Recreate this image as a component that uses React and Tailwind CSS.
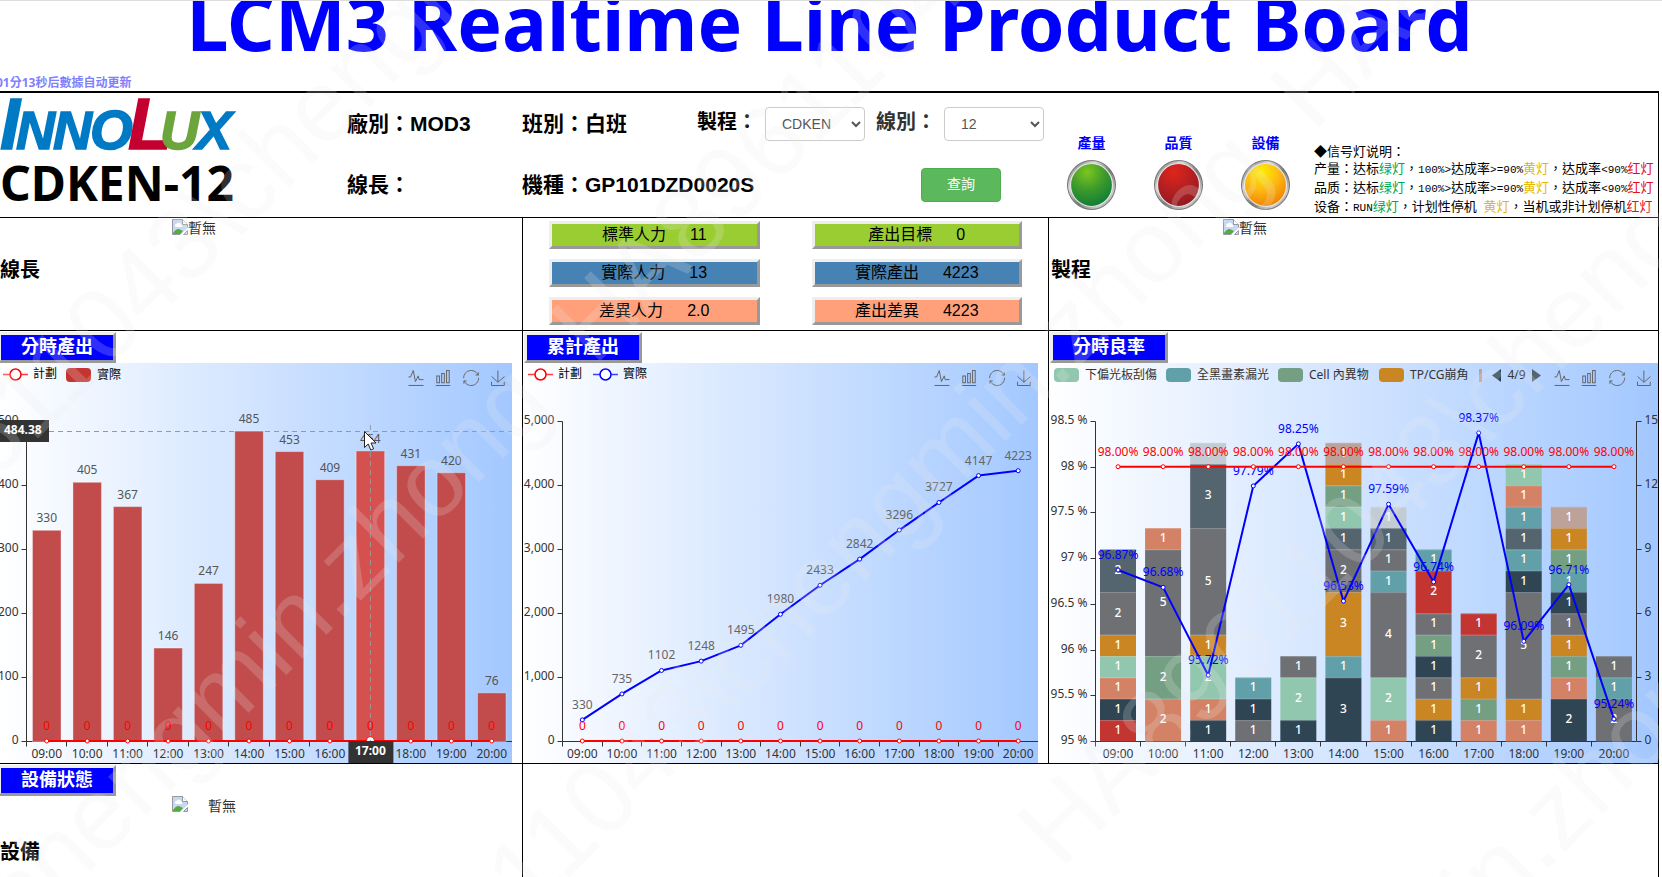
import React from "react";

const HOURS = ["09:00", "10:00", "11:00", "12:00", "13:00", "14:00", "15:00", "16:00", "17:00", "18:00", "19:00", "20:00"];
const HOURLY = [330, 405, 367, 146, 247, 485, 453, 409, 454, 431, 420, 76];
const TOTALS = [330, 735, 1102, 1248, 1495, 1980, 2433, 2842, 3296, 3727, 4147, 4223];
const YIELDS = [96.87, 96.68, 95.72, 97.79, 98.25, 96.53, 97.59, 96.74, 98.37, 96.09, 96.71, 95.24];

const RED = "#c23531";
const NAVY = "#2f4554";
const TEAL = "#61a0a8";
const CORAL = "#d48265";
const MINT = "#91c7ae";
const GREEN = "#749f83";
const AMBER = "#ca8622";
const ROSE = "#bda29a";
const GRAY = "#6e7074";
const SLATE = "#546570";
const SILVER = "#c4ccd3";

// Defects of each hour, listed from the bottom of the stack.
const DEFECTS = [
  [[RED, 1], [NAVY, 1], [CORAL, 1], [MINT, 1], [AMBER, 1], [GRAY, 2], [SLATE, 2]],
  [[CORAL, 2], [GREEN, 2], [GRAY, 5], [CORAL, 1]],
  [[NAVY, 1], [CORAL, 1], [MINT, 2], [AMBER, 1], [GRAY, 5], [SLATE, 3], [SILVER, 1]],
  [[GRAY, 1], [NAVY, 1], [TEAL, 1]],
  [[NAVY, 1], [MINT, 2], [GRAY, 1]],
  [[NAVY, 3], [TEAL, 1], [AMBER, 3], [GRAY, 2], [SLATE, 1], [MINT, 1], [GREEN, 1], [AMBER, 1], [ROSE, 1]],
  [[CORAL, 1], [MINT, 2], [GRAY, 4], [TEAL, 1], [GRAY, 1], [SLATE, 1], [SILVER, 1]],
  [[NAVY, 1], [AMBER, 1], [GRAY, 1], [NAVY, 1], [GREEN, 1], [GRAY, 1], [RED, 2], [TEAL, 1]],
  [[CORAL, 1], [GREEN, 1], [AMBER, 1], [GRAY, 2], [RED, 1]],
  [[CORAL, 1], [AMBER, 1], [GRAY, 5], [NAVY, 1], [TEAL, 1], [SLATE, 1], [TEAL, 1], [CORAL, 1], [MINT, 1]],
  [[NAVY, 2], [CORAL, 1], [GREEN, 1], [AMBER, 1], [GRAY, 1], [NAVY, 1], [TEAL, 1], [GREEN, 1], [AMBER, 1], [ROSE, 1]],
  [[GRAY, 2], [TEAL, 1], [GRAY, 1]],
];

const BASE = 378.5;
const TOP = 58.5;

function Backdrop({ id, x, width }) {
  return (
    <>
      <defs>
        <linearGradient id={id} x1="0" y1="0" x2="1" y2="0">
          <stop offset="0" stopColor="#ffffff" />
          <stop offset="1" stopColor="#a3c8ff" />
        </linearGradient>
      </defs>
      <rect x={x} y="0" width={width} height="400" fill={`url(#${id})`} />
    </>
  );
}

function Toolbox({ right }) {
  const tools = [
    ["4.1 6.9 51.4 51.1", "M4.1,28.9h7.1l9.3-22l7.4,38l9.7-19.7l3,12.8h14.9M4.1,58h51.4", 96],
    ["3.1 2 53.7 56.1", "M6.7,22.9h10V48h-10V22.9zM24.9,13h10v35h-10V13zM43.2,2h10v46h-10V2zM3.1,58h53.7", 69],
    ["2 2 55 56", "M47,18.9h9.8V8.7M56.3,20.1C52.1,9,40.5,0.6,26.8,2.1C12.6,3.7,1.6,16.2,2.1,30.6M13,41.1H3.1v10.2M3.7,39.9c4.2,11.1,15.8,19.5,29.5,18c14.2-1.6,25.2-14.1,24.7-28.5", 41],
    ["4.6 0 50.1 58", "M4.7,22.9L29.3,45.5L54.7,23.4M4.6,43.6L4.6,58L53.8,58L53.8,43.6M29.2,45.1L29.2,0", 14],
  ];
  return tools.map(([box, d, offset]) => (
    <svg key={offset} x={right - offset - 7.5} y="7.5" width="15" height="15" viewBox={box} overflow="visible">
      <path d={d} fill="none" stroke="#666" strokeWidth="1" vectorEffect="non-scaling-stroke" />
    </svg>
  ));
}

function HourAxis({ left, right, step, skip }) {
  return (
    <g>
      <path d={`M${left} ${BASE}H${right}`} stroke="#333" />
      {HOURS.map((hour, i) => (
        <g key={hour}>
          <path d={`M${Math.floor(left + i * step) + 0.5} ${BASE}v5`} stroke="#333" />
          {i !== skip && (
            <text x={left + (i + 0.5) * step} y="395" textAnchor="middle" fill="#333">
              {hour}
            </text>
          )}
        </g>
      ))}
    </g>
  );
}

function ValueAxis({ x, labels, side }) {
  const dir = side === "right" ? 1 : -1;
  const gap = (BASE - TOP) / (labels.length - 1);
  return (
    <g>
      <path d={`M${x} ${TOP}V${BASE}`} stroke="#333" />
      {labels.map((label, i) => {
        const y = Math.round(BASE - i * gap - 0.5) + 0.5;
        return (
          <g key={label}>
            <path d={`M${x} ${y}h${5 * dir}`} stroke="#333" />
            <text x={x + 8 * dir} y={y + 2} textAnchor={dir > 0 ? "start" : "end"} fill="#333">
              {label}
            </text>
          </g>
        );
      })}
    </g>
  );
}

function Series({ points, color, labels, labelColor }) {
  return (
    <g>
      <polyline points={points.map((p) => p.join(",")).join(" ")} fill="none" stroke={color} strokeWidth="2" strokeLinejoin="bevel" />
      {points.map(([x, y], i) => (
        <g key={i}>
          <circle cx={x} cy={y} r="2" fill="#fff" stroke={color} />
          <text x={x} y={y - 11} textAnchor="middle" fill={labelColor || color}>
            {labels[i]}
          </text>
        </g>
      ))}
    </g>
  );
}

function LineKey({ x, color, label }) {
  return (
    <g>
      <path d={`M${x} 11.5h25`} stroke={color} strokeWidth="1.5" opacity="0.75" />
      <circle cx={x + 12.5} cy="11.5" r="5.5" fill="#fff" stroke={color} strokeWidth="1.5" />
      <text x={x + 30} y="15" fill="#000">
        {label}
      </text>
    </g>
  );
}

function BlockKey({ x, color, label, textColor = "#333" }) {
  return (
    <g>
      <rect x={x} y="5" width="25" height="14" rx="4" fill={color} />
      <text x={x + 31} y="16" fill={textColor}>
        {label}
      </text>
    </g>
  );
}

const chartClass = "block h-auto w-full font-['Noto_Sans','Noto_Sans_CJK_TC',sans-serif] text-[12px]";

function HourlyChart() {
  const left = 26.5;
  const right = 512;
  const step = (right - left) / 12;
  const hover = 8;
  const hoverX = left + (hover + 0.5) * step;
  return (
    <svg viewBox="0 0 522 400" className={chartClass} role="img" aria-label="分時產出">
      <Backdrop id="hourly-bg" x={0} width={512} />
      <LineKey x={3} color="#f00" label="計劃" />
      <BlockKey x={66} color={RED} label="實際" textColor="#000" />
      <Toolbox right={512} />
      <ValueAxis x={left} labels={["0", "100", "200", "300", "400", "500"]} />
      <HourAxis left={left} right={right} step={step} skip={hover} />
      {HOURLY.map((value, i) => {
        const height = value * 0.64;
        const x = left + i * step + 6;
        return (
          <g key={i}>
            <rect x={x} y={BASE - height} width="28.5" height={height} fill={i === hover ? "#d55150" : "#c24c4b"} stroke="#fff" strokeOpacity="0.35" />
            <text x={left + (i + 0.5) * step} y={BASE - height - 8} textAnchor="middle" fill="#555">
              {value}
            </text>
          </g>
        );
      })}
      <Series
        points={HOURS.map((_, i) => [left + (i + 0.5) * step, 378])}
        color="#f00"
        labels={HOURS.map(() => "0")}
      />
      <circle cx={hoverX} cy={BASE - 1} r="4" fill="#fff" stroke="#f00" />
      <path d={`M49 68.5H512M${hoverX} 62V378`} stroke="#999" strokeDasharray="5 4" />
      <rect x="-2" y="57" width="51" height="22" fill="#333" />
      <text x="4" y="71" fontWeight="700" fill="#fff">
        484.38
      </text>
      <rect x={hoverX - 22} y="378" width="45" height="22" fill="#333" />
      <text x={hoverX} y="392" textAnchor="middle" fontWeight="700" fill="#fff">
        17:00
      </text>
      <path d="M364.500 68.500v16l3.700-3.500l2.600 6l2.800-1.200l-2.600-5.800h5z" fill="#fff" stroke="#222" />
    </svg>
  );
}

function TotalChart() {
  const left = 39.5;
  const right = 515;
  const step = (right - left) / 12;
  const at = (value, i) => [left + (i + 0.5) * step, 378 - value * 0.064];
  return (
    <svg viewBox="0 0 525 400" className={chartClass} role="img" aria-label="累計產出">
      <Backdrop id="total-bg" x={1} width={514} />
      <LineKey x={5} color="#f00" label="計劃" />
      <LineKey x={70} color="#00f" label="實際" />
      <Toolbox right={515} />
      <ValueAxis x={left} labels={["0", "1,000", "2,000", "3,000", "4,000", "5,000"]} />
      <HourAxis left={left} right={right} step={step} />
      <Series points={TOTALS.map(at)} color="#00f" labels={TOTALS} labelColor="#666" />
      <Series points={HOURS.map((_, i) => at(0, i))} color="#f00" labels={HOURS.map(() => "0")} />
    </svg>
  );
}

function YieldChart() {
  const left = 46.5;
  const right = 587.5;
  const step = (right - left) / 12;
  const unit = (BASE - TOP) / 15;
  const at = (value, i) => [left + (i + 0.5) * step, 378 - ((value - 95) * (BASE - TOP)) / 3.5];
  return (
    <svg viewBox="0 0 609 400" className={chartClass} role="img" aria-label="分時良率">
      <Backdrop id="yield-bg" x={1} width={608} />
      <BlockKey x={5} color={MINT} label="下偏光板刮傷" />
      <BlockKey x={117} color={TEAL} label="全黑畫素漏光" />
      <BlockKey x={229} color={GREEN} label="Cell 內異物" />
      <BlockKey x={330} color={AMBER} label="TP/CG崩角" />
      <rect x="430" y="6" width="3" height="13" fill={ROSE} />
      <path d="M443 12.500L452 6V19z" fill={NAVY} />
      <text x="467.500" y="16" textAnchor="middle" fill="#333">
        4/9
      </text>
      <path d="M492 12.500L483 6V19z" fill={SLATE} />
      <Toolbox right={609} />
      <ValueAxis x={left} labels={["95 %", "95.5 %", "96 %", "96.5 %", "97 %", "97.5 %", "98 %", "98.5 %"]} />
      <ValueAxis x={right} labels={["0", "3", "6", "9", "12", "15"]} side="right" />
      <HourAxis left={left} right={right} step={step} />
      {DEFECTS.map((stack, i) => {
        let sum = 0;
        return stack.map(([color, count], j) => {
          sum += count;
          const y = BASE - sum * unit;
          return (
            <g key={`${i}-${j}`}>
              <rect x={left + i * step + 4.5} y={y} width="36" height={count * unit} fill={color} />
              <path d={`M${left + i * step + 4.5} ${y + 0.5}h36`} stroke="#fff" strokeOpacity="0.15" />
              <text x={left + (i + 0.5) * step} y={y + (count * unit) / 2 + 3} textAnchor="middle" fill="#fff" fontWeight="500">
                {count}
              </text>
            </g>
          );
        });
      })}
      <Series points={YIELDS.map(at)} color="#00f" labels={YIELDS.map((v) => `${v.toFixed(2)}%`)} />
      <Series points={HOURS.map((_, i) => at(98, i))} color="#f00" labels={HOURS.map(() => "98.00%")} />
    </svg>
  );
}

function Logo() {
  const letters = [
    ["I", 0, 72, "#007ac5"],
    ["N", 16, 54, "#007ac5"],
    ["N", 53, 54, "#007ac5"],
    ["O", 90, 55, "#007ac5"],
    ["L", 128, 72, "#c3002f"],
    ["U", 160, 54, "#6ba53c"],
    ["X", 196, 54, "#007ac5"],
  ];
  return (
    <svg width="240" height="56" viewBox="0 0 240 56" className="block font-['Liberation_Sans',sans-serif] font-bold italic" role="img" aria-label="INNOLUX">
      {letters.map(([letter, x, size, color]) => (
        <text key={x} x={x} y="52" fontSize={size} fill={color} stroke={color} strokeWidth="1.500">
          {letter}
        </text>
      ))}
    </svg>
  );
}

function BrokenImage() {
  return (
    <svg width="16" height="16" viewBox="0 0 16 16" className="block shrink-0" aria-hidden="true">
      <path d="M.5 .5H10.500L15.500 5.500V9L8.500 15.500H.500z" fill="#c6d8f5" />
      <path d="M3 6.500a2 2 0 0 1 2-2a2.300 2.300 0 0 1 4 1a1.300 1.300 0 0 1 .5 2.500H4a1.300 1.300 0 0 1-1-1.500z" fill="#fff" />
      <path d="M1 15.500V14Q5 8.500 8 10.500L11 12L8 15.500z" fill="#58a942" />
      <path d="M8 15.500H.500V.500H10.500L15.500 5.500V8.500" fill="none" stroke="#999" />
      <path d="M10.500 .500V5.500H15.500" fill="#fff" stroke="#999" />
      <path d="M11.500 15.500H15.500V11.500z" fill="#c6d8f5" stroke="#999" />
    </svg>
  );
}

function Tab({ children }) {
  return (
    <h2 className="flex h-[31px] w-[118px] items-center justify-center border-3 border-t-[#eee] border-r-[#999] border-b-[#999] border-l-[#eee] bg-[#0000ff] text-[18px] font-bold text-white">
      {children}
    </h2>
  );
}

function Stat({ tone, label, value }) {
  return (
    <div className={`flex h-7 items-center justify-center gap-6 border-3 border-t-[#eee] border-r-[#999] border-b-[#999] border-l-[#eee] text-base leading-5 text-black ${tone}`}>
      <span>{label}</span>
      <span>{value}</span>
    </div>
  );
}

function Person({ label, className = "" }) {
  return (
    <section className={`grid grid-cols-[172px_1fr] border-y border-r border-black ${className}`}>
      <h2 className="self-center pb-2 text-[20px] leading-6 font-bold text-black">{label}</h2>
      <div className="flex pt-px text-[14px] leading-5 text-[#333]">
        <BrokenImage />
        <span className="-mt-px">暫無</span>
      </div>
    </section>
  );
}

function Light({ id, label, from, mid, to }) {
  return (
    <div className="flex w-[49px] flex-col items-center gap-[7px]">
      <span className="text-[14px] leading-5 font-bold whitespace-nowrap text-[#0000ff]">{label}</span>
      <svg width="49" height="50" viewBox="0 0 49 50" role="img" aria-label={label}>
        <defs>
          <radialGradient id={id} cx="0.4" cy="0.2" r="0.85">
            <stop offset="0" stopColor={from} />
            <stop offset="0.5" stopColor={mid} />
            <stop offset="1" stopColor={to} />
          </radialGradient>
          <linearGradient id={`${id}-rim`} x1="0" y1="0" x2="1" y2="1">
            <stop offset="0" stopColor="#555" />
            <stop offset="0.3" stopColor="#ddd" />
            <stop offset="0.55" stopColor="#777" />
            <stop offset="0.8" stopColor="#ccc" />
            <stop offset="1" stopColor="#444" />
          </linearGradient>
        </defs>
        <ellipse cx="24.500" cy="25" rx="24" ry="24.500" fill={`url(#${id}-rim)`} stroke="#555" strokeWidth="0.8" />
        <ellipse cx="24.500" cy="25" rx="21" ry="21.500" fill={`url(#${id})`} stroke="#e5e5e5" strokeWidth="1.200" />
      </svg>
    </div>
  );
}

const G = ({ children = "绿灯" }) => <span className="text-[#00a650]">{children}</span>;
const Y = ({ children = "黄灯" }) => <span className="text-[#e6b800]">{children}</span>;
const R = ({ children = "红灯" }) => <span className="text-[#e01020]">{children}</span>;
const M = ({ children }) => <span className="font-['Liberation_Mono',monospace] text-[11px]">{children}</span>;

function Field({ id, label, options, tone }) {
  return (
    <div className="flex items-center gap-2">
      <label htmlFor={id} className={`w-[60px] pb-1 text-[20px] whitespace-nowrap ${tone}`}>
        {label}：
      </label>
      <select id={id} className="h-[34px] w-[100px] rounded-sm border border-[#ccc] bg-white px-3 text-[14px] font-normal text-[#555]">
        {options.map((option) => (
          <option key={option}>{option}</option>
        ))}
      </select>
    </div>
  );
}

const MARK = "HA89611043\\chengmin.zhong\u00a0\u00a0";
const MARK_ROWS = [
  [-602, 336],
  [-1260, 679],
  [-586, 1022],
  [-1286, 1365],
  [-586, 1708],
];

function Watermark() {
  return (
    <svg className="pointer-events-none absolute inset-0 h-full w-full font-['Liberation_Sans',sans-serif]" aria-hidden="true">
      <g transform="rotate(-45)" fill="#ebebeb" fillOpacity="0.2" fontSize="102">
        {MARK_ROWS.map(([x, y]) => (
          <text key={y} x={x} y={y}>
            {MARK + MARK}
          </text>
        ))}
      </g>
    </svg>
  );
}

export default function App() {
  return (
    <div className="relative flex min-h-screen w-full flex-col overflow-hidden border-t border-[#ddd] bg-white pr-[3px] font-['Liberation_Sans','Noto_Sans_CJK_TC',sans-serif]">
      <h1 className="text-center font-['Noto_Sans',sans-serif] text-[75px] leading-[42px] font-bold whitespace-nowrap text-[#0000ff]">
        LCM3 Realtime Line Product Board
      </h1>
      <p className="-ml-1 pt-[31px] font-['Noto_Sans','Noto_Sans_CJK_TC',sans-serif] text-[12px] leading-[17px] font-bold text-[#8080ff]">
        01分13秒后數據自动更新
      </p>

      <header className="flex border-t-2 border-r border-black text-[21px] font-bold whitespace-nowrap text-black">
        <div className="w-[347px] shrink-0 pt-1">
          <Logo />
          <p className="pt-1 font-['Noto_Sans',sans-serif] text-[48px] leading-[52px]">CDKEN-12</p>
        </div>
        <div className="mb-0.5 grid h-[122px] grow grid-cols-[175px_175px_1fr] grid-rows-2 items-center">
          <p>廠別：MOD3</p>
          <p>班別：白班</p>
          <div className="flex items-center gap-[11px]">
            <Field id="process" label="製程" options={["CDKEN"]} tone="text-black" />
            <Field id="line" label="線別" options={["12"]} tone="text-[#333]" />
          </div>
          <p>線長：</p>
          <p>機種：GP101DZD0020S</p>
          <button type="button" className="ml-56 h-[34px] w-20 rounded-sm border border-[#4cae4c] bg-[#5cb85c] text-[14px] font-normal text-white">
            查詢
          </button>
        </div>
        <div className="flex shrink-0 gap-[38px] pt-10">
          <Light id="output" label="產量" from="#7cc61f" mid="#3c9a2c" to="#0b7a38" />
          <Light id="quality" label="品質" from="#e0251b" mid="#b51f22" to="#8f1a20" />
          <Light id="equipment" label="設備" from="#ffee00" mid="#fdb813" to="#ef7d00" />
        </div>
        <div className="ml-6 w-[344px] shrink-0 pt-[50px] text-[13px] leading-[17px] font-normal">
          <p>◆信号灯说明：</p>
          <p>产量：达标<G />，<M>100%&gt;</M>达成率<M>&gt;=90%</M><Y />，达成率<M>&lt;90%</M><R /></p>
          <p>品质：达标<G />，<M>100%&gt;</M>达成率<M>&gt;=90%</M><Y />，达成率<M>&lt;90%</M><R /></p>
          <p>设备：<M>RUN</M><G />，计划性停机<M> </M><Y />，当机或非计划停机<R /></p>
        </div>
      </header>

      <main className="grid grow grid-cols-[523fr_526fr_610fr] grid-rows-[114px_433px_1fr]">
        <Person label="線長" />
        <section className="grid grid-cols-2 content-start gap-x-[52px] gap-y-[10px] border-y border-r border-black px-[26px] pt-[3px]">
          <Stat tone="bg-[#9acd32]" label="標準人力" value="11" />
          <Stat tone="bg-[#9acd32]" label="產出目標" value="0" />
          <Stat tone="bg-[#4682b4]" label="實際人力" value="13" />
          <Stat tone="bg-[#4682b4]" label="實際產出" value="4223" />
          <Stat tone="bg-[#ffa07a]" label="差異人力" value="2.0" />
          <Stat tone="bg-[#ffa07a]" label="產出差異" value="4223" />
        </section>
        <Person label="製程" className="pl-0.5" />

        <section className="border-r border-b border-black pt-px">
          <div className="-ml-0.5">
            <Tab>分時產出</Tab>
          </div>
          <HourlyChart />
        </section>
        <section className="border-r border-b border-black pt-px">
          <div className="pl-px">
            <Tab>累計產出</Tab>
          </div>
          <TotalChart />
        </section>
        <section className="border-r border-b border-black pt-px">
          <div className="pl-px">
            <Tab>分時良率</Tab>
          </div>
          <YieldChart />
        </section>

        <section className="border-r border-black pt-px">
          <div className="-ml-0.5">
            <Tab>設備狀態</Tab>
          </div>
          <div className="flex gap-5 pl-[172px] text-[14px] leading-5 text-[#333]">
            <BrokenImage />
            <span>暫無</span>
          </div>
          <h2 className="pt-6 text-[20px] leading-6 font-bold text-black">設備</h2>
        </section>
        <section className="col-span-2 border-r border-black" />
      </main>
      <Watermark />
    </div>
  );
}
